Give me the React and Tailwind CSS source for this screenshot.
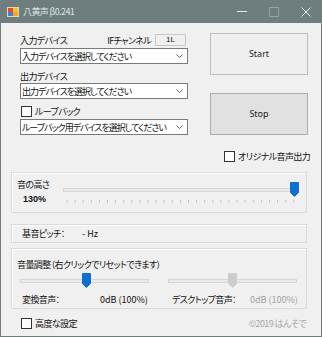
import React from "react";

const jp = "font-['Noto_Sans_CJK_JP','Noto_Sans',sans-serif] [font-feature-settings:'palt'] tracking-[-0.6px]";

function Combo({ text }) {
  return (
    <div className="h-[16px] bg-white border border-[#7a7a7a] flex items-center justify-between pl-[1px] pr-[4px]">
      <span className="text-[9px] leading-none text-[#111] whitespace-nowrap tracking-[-1px]">{text}</span>
      <svg width="7" height="4" viewBox="0 0 7 4"><path d="M0.5 0.5 L3.5 3.5 L6.5 0.5" fill="none" stroke="#606060" strokeWidth="1" /></svg>
    </div>
  );
}

function Check({ label, className = "", textClass = "" }) {
  return (
    <div className={"flex items-center gap-[3px] " + className}>
      <div className="w-[11px] h-[11px] shrink-0 bg-white border border-[#333]" />
      <span className={"text-[9px] leading-none text-[#111] whitespace-nowrap " + textClass}>{label}</span>
    </div>
  );
}

function Thumb({ color }) {
  return (
    <svg width="9" height="15" viewBox="0 0 9 15">
      <path d="M0.5 0.5 H8.5 V10.5 L4.5 14.5 L0.5 10.5 Z" fill={color} stroke={color} strokeWidth="1" />
    </svg>
  );
}

function Slider({ pos, color, ticks }) {
  return (
    <div className="relative h-[15px]">
      <div className="absolute left-0 right-0 top-[6px] h-[4px] bg-[#e7eaea] border border-[#d6d6d6]" />
      <div className="absolute top-0" style={{ left: pos - 4 }}>
        <Thumb color={color} />
      </div>
      {ticks}
    </div>
  );
}

export default function App() {
  const ticks = [];
  for (let i = 0; i <= 28; i++) {
    ticks.push(<line key={i} x1={4 + i * 8.1} y1="0" x2={4 + i * 8.1} y2="3" stroke="#c4c4c4" strokeWidth="1" />);
  }
  return (
    <div className={"w-[322px] h-[337px] bg-[#6e7d7d] flex flex-col " + jp}>
      {/* title bar */}
      <div className="h-[23px] flex items-center relative">
        <svg className="ml-[7px]" width="12" height="12" viewBox="0 0 12 12">
          <rect x="0" y="1" width="12" height="10" fill="#e8d7a8" />
          <rect x="1" y="2" width="5" height="4" fill="#e34a3a" />
          <rect x="6" y="2" width="5" height="4" fill="#f2c230" />
          <rect x="1" y="6" width="5" height="4" fill="#4a7fd8" />
          <rect x="6" y="6" width="5" height="4" fill="#f5a623" />
        </svg>
        <span className="ml-[4px] text-[9px] leading-none text-[#dfe4e4]">八黄声 β0.241</span>
        <div className="ml-auto flex items-center h-full">
          <div className="w-[32px] flex justify-center"><div className="w-[10px] h-px bg-[#e8ecec]" /></div>
          <div className="w-[32px] flex justify-center"><div className="w-[10px] h-[10px] border border-[#95a2a2]" /></div>
          <div className="w-[32px] flex justify-center">
            <svg width="10" height="10" viewBox="0 0 10 10"><path d="M0.5 0.5 L9.5 9.5 M9.5 0.5 L0.5 9.5" stroke="#e8ecec" strokeWidth="1" /></svg>
          </div>
        </div>
      </div>
      {/* body */}
      <div className="flex-1 mx-px mb-px bg-[#f0f0f0] flex flex-col">
        <div className="flex pl-[19px] pt-[10px]">
          <div className="w-[168px] flex flex-col">
            <div className="h-[14px] flex items-center justify-between">
              <span className="text-[9px] leading-none text-[#111]">入力デバイス</span>
              <div className="flex items-center mr-[2px]">
                <span className="text-[9px] leading-none text-[#111] mr-[4px]">IFチャンネル</span>
                <div className="w-[31px] h-[12px] bg-[#f0f0f0] border border-[#c8c8c8] flex items-center justify-center text-[8px] leading-none text-[#111] font-['Liberation_Sans'] tracking-normal">1L</div>
              </div>
            </div>
            <div className="mt-[1px]"><Combo text="入力デバイスを選択してください" /></div>
            <div className="mt-[5px] h-[14px] flex items-center">
              <span className="text-[9px] leading-none text-[#111]">出力デバイス</span>
            </div>
            <Combo text="出力デバイスを選択してください" />
            <Check className="mt-[5px] h-[14px] pl-[1px]" label="ループバック" />
            <div className="mt-[1px]"><Combo text="ループバック用デバイスを選択してください" /></div>
          </div>
          <div className="ml-[22px] w-[98px] flex flex-col">
            <div className="h-[42px] bg-[#efefef] border border-[#bdbdbd] flex items-center justify-center text-[9px] text-[#222] font-['Noto_Sans',sans-serif] tracking-normal">Start</div>
            <div className="mt-[18px] h-[42px] bg-[#e1e1e1] border border-[#adadad] flex items-center justify-center text-[9px] text-[#222] font-['Noto_Sans',sans-serif] tracking-normal">Stop</div>
          </div>
        </div>
        <Check className="mt-[15px] ml-[223px] h-[12px]" label="オリジナル音声出力" />

        {/* group 1 */}
        <div className="mt-[10px] ml-[10px] w-[296px] h-[41px] border border-[#dadada] shadow-[inset_1px_1px_0_#ffffff] flex">
          <div className="w-[50px] pl-[5px] pt-[6px] flex flex-col">
            <span className="text-[9px] leading-[12px] text-[#111]">音の高さ</span>
            <span className="mt-[3px] ml-[6px] text-[9px] leading-[10px] font-bold text-[#111] font-['Liberation_Sans'] tracking-normal">130%</span>
          </div>
          <div className="ml-[1px] w-[235px] pt-[9px]">
            <Slider pos={231} color="#0f6fd0" ticks={
              <svg className="absolute left-0 top-[18px]" width="235" height="4">{ticks}</svg>
            } />
          </div>
        </div>

        {/* group 2 */}
        <div className="mt-[11px] ml-[10px] w-[296px] h-[19px] border border-[#dadada] shadow-[inset_1px_1px_0_#ffffff] flex items-center">
          <span className="ml-[10px] w-[60px] text-[9px] leading-none text-[#111]">基音ピッチ：</span>
          <span className="text-[9px] leading-none text-[#111] tracking-normal">- Hz</span>
        </div>

        {/* group 3 */}
        <div className="mt-[5px] ml-[10px] w-[296px] h-[61px] border border-[#dadada] shadow-[inset_1px_1px_0_#ffffff] flex flex-col">
          <span className="mt-[10px] ml-[5px] text-[9px] leading-[12px] text-[#111]">音量調整（右クリックでリセットできます）</span>
          <div className="mt-[2px] flex">
            <div className="ml-[8px] w-[129px]"><Slider pos={66} color="#0f6fd0" /></div>
            <div className="ml-[19px] w-[129px]"><Slider pos={64} color="#cccccc" /></div>
          </div>
          <div className="mt-[7px] flex items-center text-[9px] leading-none whitespace-nowrap">
            <span className="ml-[10px] w-[78px] text-[#111]">変換音声：</span>
            <span className="w-[72px] text-[#111] tracking-normal">0dB (100%)</span>
            <span className="w-[78px] text-[#111]">デスクトップ音声：</span>
            <span className="text-[#a0a0a0] tracking-normal">0dB (100%)</span>
          </div>
        </div>

        {/* bottom */}
        <div className="mt-[9px] flex items-center pl-[20px] pr-[15px]">
          <Check label="高度な設定" />
          <span className="ml-auto text-[9px] leading-none text-[#a8a8a8]">©2019 はんそで</span>
        </div>
      </div>
    </div>
  );
}
